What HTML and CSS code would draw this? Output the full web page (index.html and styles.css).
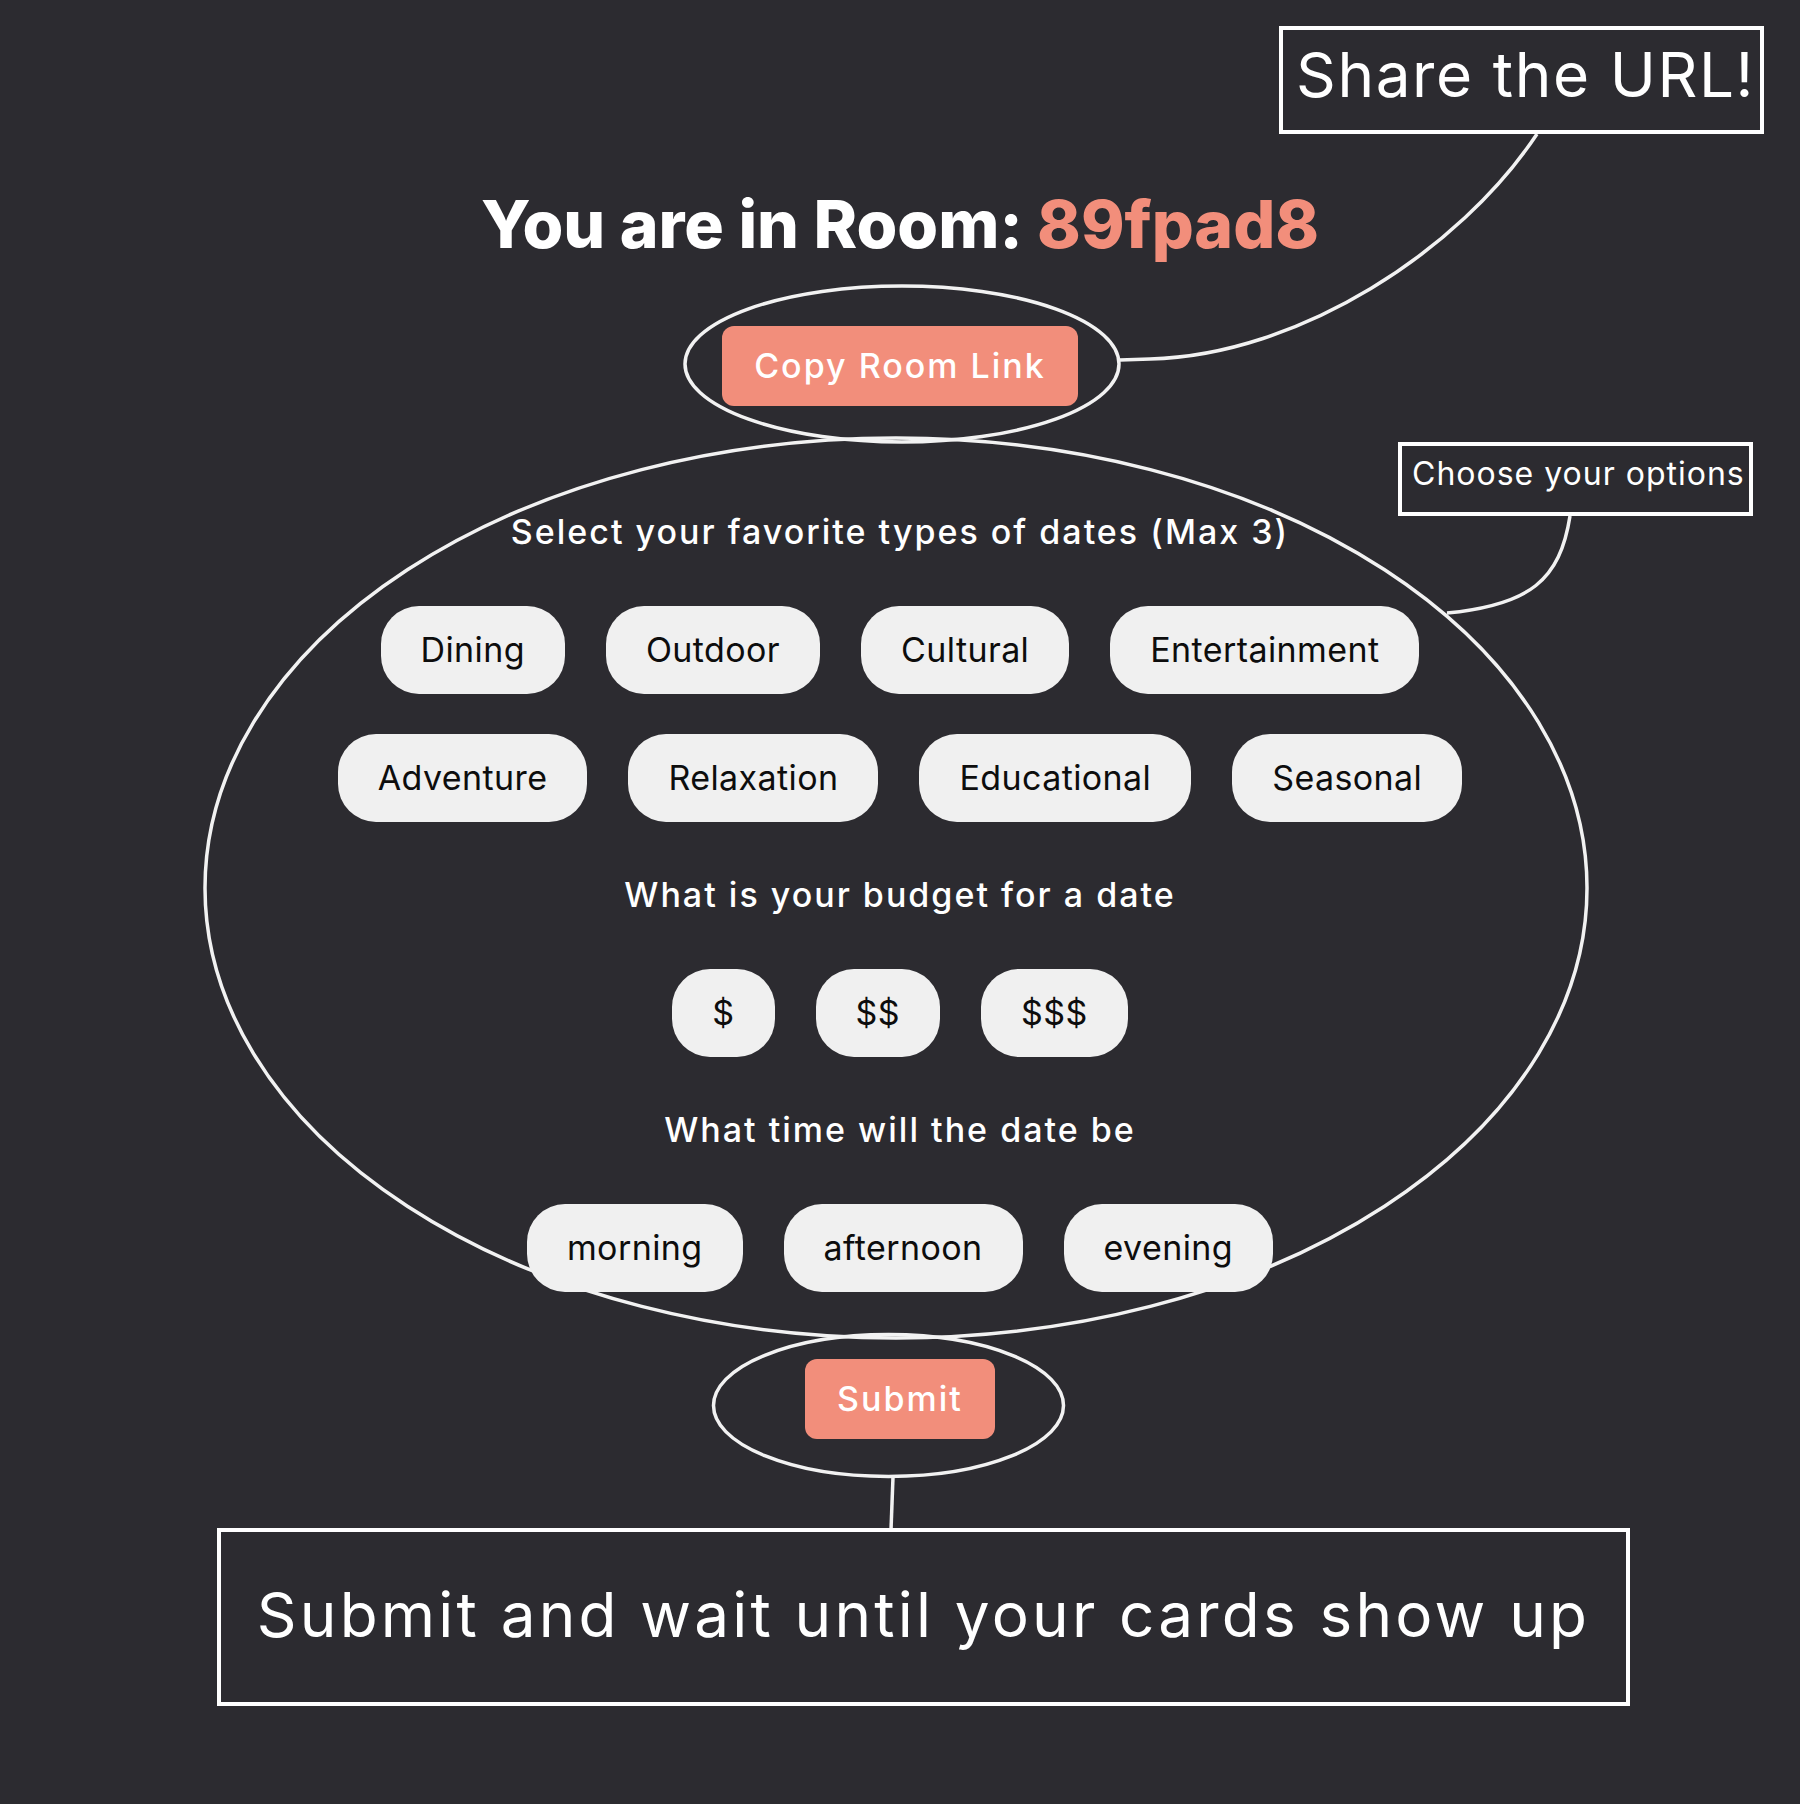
FILE: index.html
```html
<!DOCTYPE html>
<html lang="en">
<head>
<meta charset="utf-8">
<title>Room 89fpad8</title>
<link rel="stylesheet" href="styles.css">
</head>
<body>
<div class="annotations">
  <svg class="strokes" width="1800" height="1804" viewBox="0 0 1800 1804" aria-hidden="true">
    <ellipse cx="902" cy="364" rx="217" ry="78"/>
    <ellipse cx="896" cy="888" rx="691" ry="450"/>
    <ellipse cx="888.5" cy="1405.5" rx="175" ry="71"/>
    <path d="M1120 360 L1150 359 C1300 355 1460 250 1537 134"/>
    <path d="M1570 516 C1560 580 1530 605 1447 613"/>
    <path d="M893 1477 L891 1530"/>
  </svg>
  <div class="note note-share">Share the URL!</div>
  <div class="note note-options">Choose your options</div>
  <div class="note note-submit">Submit and wait until your cards show up</div>
</div>

<main class="room">
  <h1 class="room-title">You are in Room: <span class="room-code">89fpad8</span></h1>
  <button class="btn btn-copy" type="button">Copy Room Link</button>

  <section class="options">
    <div class="group">
      <h2 class="group-title">Select your favorite types of dates (Max 3)</h2>
      <div class="chip-rows">
        <div class="chip-row">
          <button class="chip" type="button">Dining</button>
          <button class="chip" type="button">Outdoor</button>
          <button class="chip" type="button">Cultural</button>
          <button class="chip" type="button">Entertainment</button>
        </div>
        <div class="chip-row">
          <button class="chip" type="button">Adventure</button>
          <button class="chip" type="button">Relaxation</button>
          <button class="chip" type="button">Educational</button>
          <button class="chip" type="button">Seasonal</button>
        </div>
      </div>
    </div>

    <div class="group">
      <h2 class="group-title">What is your budget for a date</h2>
      <div class="chip-row">
        <button class="chip" type="button">$</button>
        <button class="chip" type="button">$$</button>
        <button class="chip" type="button">$$$</button>
      </div>
    </div>

    <div class="group">
      <h2 class="group-title">What time will the date be</h2>
      <div class="chip-row">
        <button class="chip" type="button">morning</button>
        <button class="chip" type="button">afternoon</button>
        <button class="chip" type="button">evening</button>
      </div>
    </div>
  </section>

  <button class="btn btn-submit" type="button">Submit</button>
</main>
</body>
</html>
```

FILE: styles.css
```css
html, body {
  margin: 0;
  padding: 0;
}

body {
  background: #2c2b30;
  color: #ffffff;
  font-family: "Inter", "Open Sans", "DejaVu Sans", sans-serif;
  min-height: 1804px;
  position: relative;
}

/* ---------- annotation layer ---------- */
.annotations {
  position: absolute;
  inset: 0;
  z-index: 0;
}

.strokes {
  position: absolute;
  left: 0;
  top: 0;
  display: block;
}

.strokes ellipse,
.strokes path {
  fill: none;
  stroke: #f2f2f2;
  stroke-width: 3.5;
}

.note {
  position: absolute;
  box-sizing: border-box;
  border: 4px solid #ffffff;
  color: #ffffff;
  font-weight: 400;
  white-space: nowrap;
}

.note-share {
  left: 1279px;
  top: 26px;
  width: 485px;
  height: 108px;
  font-size: 62px;
  line-height: 75px;
  letter-spacing: 1.6px;
  padding: 7px 0 0 13px;
}

.note-options {
  left: 1398px;
  top: 442px;
  width: 355px;
  height: 74px;
  font-size: 32px;
  line-height: 39px;
  letter-spacing: 1px;
  padding: 8px 0 0 10px;
}

.note-submit {
  left: 217px;
  top: 1528px;
  width: 1413px;
  height: 178px;
  font-size: 62px;
  line-height: 75px;
  letter-spacing: 3.2px;
  padding-top: 45px;
  text-align: center;
}

/* ---------- main UI ---------- */
.room {
  position: relative;
  z-index: 1;
  display: flex;
  flex-direction: column;
  align-items: center;
  padding-top: 184px;
}

.room-title {
  margin: 0;
  font-size: 66px;
  line-height: 80px;
  font-weight: 800;
  color: #ffffff;
}

.room-code {
  color: #f28e7b;
}

.btn {
  border: none;
  border-radius: 12px;
  background: #f28e7b;
  color: #ffffff;
  font-family: inherit;
  font-size: 34px;
  font-weight: 500;
  letter-spacing: 2px;
  line-height: 48px;
  height: 80px;
  padding: 16px 32px;
  cursor: pointer;
}

.btn-copy {
  margin-top: 62px;
}

.options {
  margin-top: 102px;
  display: flex;
  flex-direction: column;
  align-items: center;
  gap: 49px;
}

.group {
  display: flex;
  flex-direction: column;
  align-items: center;
  gap: 50px;
}

.group-title {
  margin: 0;
  font-size: 34px;
  line-height: 48px;
  font-weight: 500;
  letter-spacing: 2px;
  color: #ffffff;
}

.chip-rows {
  display: flex;
  flex-direction: column;
  align-items: center;
  gap: 40px;
}

.chip-row {
  display: flex;
  justify-content: center;
  gap: 41px;
}

.chip {
  border: none;
  background: #f0f0f0;
  color: #0d0d0d;
  font-family: inherit;
  font-size: 34px;
  font-weight: 400;
  letter-spacing: 0.4px;
  line-height: 48px;
  height: 88px;
  padding: 20px 40px;
  border-radius: 38px;
  cursor: pointer;
}

.btn-submit {
  margin-top: 67px;
}
```
